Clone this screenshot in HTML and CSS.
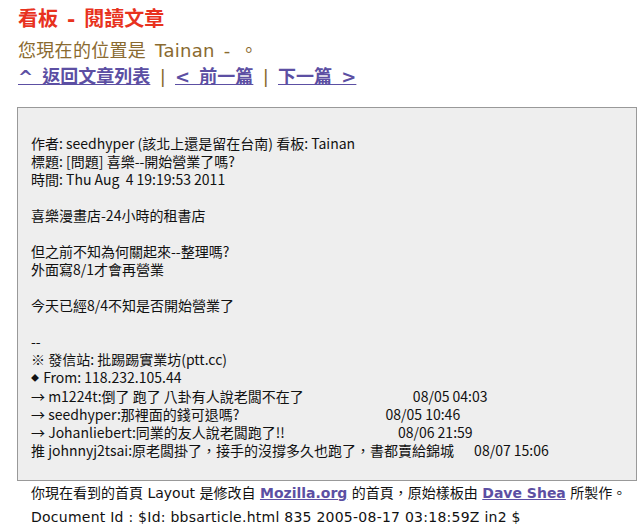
FILE: index.html
```html
<!DOCTYPE html>
<html lang="zh-Hant">
<head>
<meta charset="utf-8">
<title>看板 - 閱讀文章</title>
<link rel="stylesheet" href="styles.css">
</head>
<body>
<div class="page">
  <h1 class="title">看板 - 閱讀文章</h1>
  <p class="where">您現在的位置是 Tainan - 。</p>
  <p class="nav"><a href="#">^ 返回文章列表</a> <span class="sep">|</span> <a href="#">&lt; 前一篇</a> <span class="sep">|</span> <a href="#">下一篇 &gt;</a></p>
  <div class="article"><pre class="text">

作者: seedhyper (該北上還是留在台南) 看板: Tainan
標題: [問題] 喜樂--開始營業了嗎?
時間: Thu Aug  4 19:19:53 2011

喜樂漫畫店-24小時的租書店

但之前不知為何關起來--整理嗎?
外面寫8/1才會再營業

今天已經8/4不知是否開始營業了

--
※ 發信站: 批踢踢實業坊(ptt.cc)
<span class="dia">◆</span> From: 118.232.105.44
→ m1224t:倒了 跑了 八卦有人說老闆不在了<span class="d1">08/05 04:03</span>
→ seedhyper:那裡面的錢可退嗎?<span class="d2">08/05 10:46</span>
→ Johanliebert:同業的友人說老闆跑了!!<span class="d3">08/06 21:59</span>
推 johnnyj2tsai:原老闆掛了，接手的沒撐多久也跑了，書都賣給錦城<span class="d4">08/07 15:06</span></pre></div>
  <div class="footer">
    <p>你現在看到的首頁 Layout 是修改自 <a href="#">Mozilla.org</a> 的首頁，原始樣板由 <a href="#">Dave Shea</a> 所製作。</p>
    <p class="docid">Document Id : $Id: bbsarticle.html 835 2005-08-17 03:18:59Z in2 $</p>
  </div>
</div>
</body>
</html>
```
FILE: styles.css
```css
html, body {
  margin: 0;
  padding: 0;
  background: #fff;
}
.page {
  padding: 6px 16px 0 17px;
  font-family: "DejaVu Sans", "Noto Sans CJK TC", sans-serif;
}
.title {
  margin: 0 0 0 1px;
  font-size: 20px;
  line-height: 26px;
  font-weight: bold;
  color: #e8321e;
  word-spacing: 2px;
}
.where {
  margin: 8px 0 0 1px;
  font-size: 18px;
  line-height: 22px;
  color: #8a6a30;
  word-spacing: 3px;
  letter-spacing: 0.3px;
}
.nav {
  margin: 4px 0 0 1px;
  font-size: 18px;
  line-height: 22px;
  font-weight: bold;
  color: #8a6a30;
  word-spacing: 3px;
}
.nav a {
  color: #5c4fa3;
  text-decoration: underline;
}
.nav .sep {
  font-weight: normal;
  color: #8a6a30;
}
.article {
  margin-top: 19px;
  width: 605px;
  background: #eeeeee;
  border: 1px solid #999999;
  padding: 8px 0 21px 13px;
}
.text {
  margin: 0;
  font-family: "Noto Sans CJK TC", sans-serif;
  font-size: 14px;
  line-height: 18px;
  color: #111;
  white-space: pre;
}
.dia {
  font-size: 8px;
  vertical-align: 2px;
  margin-right: 1px;
}
.d1 { margin-left: 109px; }
.d2 { margin-left: 146px; }
.d3 { margin-left: 113px; }
.d4 { margin-left: 20px; }
.footer {
  padding-left: 14px;
  font-size: 14px;
  color: #111;
  white-space: nowrap;
}
.footer p {
  margin: 0;
  line-height: 24px;
}
.footer .docid {
  letter-spacing: 0.25px;
}
.footer a {
  font-weight: bold;
  color: #5c4fa3;
  text-decoration: underline;
}
```
